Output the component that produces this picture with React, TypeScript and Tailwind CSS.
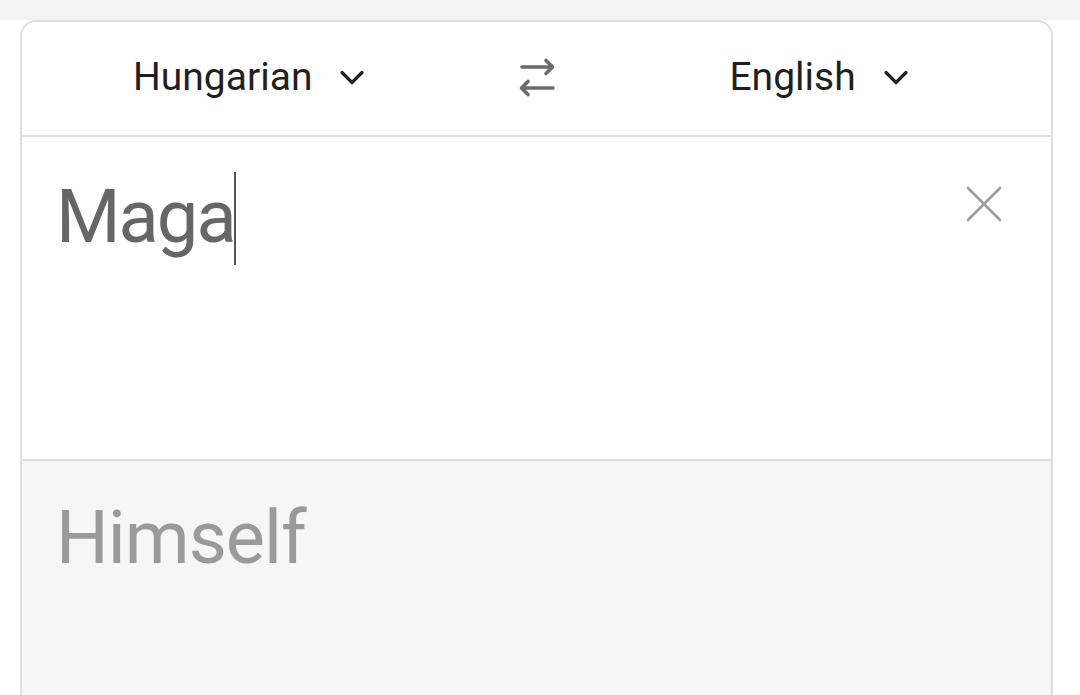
import React from "react";

const Chevron = () => (
  <svg width="26" height="17" viewBox="0 0 26 17" fill="none" className="shrink-0">
    <path d="M3 3.5 L13 13.5 L23 3.5" stroke="#222" strokeWidth="3.2" strokeLinecap="round" strokeLinejoin="round" />
  </svg>
);

const SwapIcon = () => (
  <svg width="40" height="44" viewBox="0 0 40 44" fill="none">
    <g stroke="#6b6b6b" strokeWidth="3.6" strokeLinecap="round" strokeLinejoin="round">
      <path d="M5 11 H35" />
      <path d="M29 4.5 L35.5 11 L29 17.5" />
      <path d="M5 32 H36" />
      <path d="M11 25.5 L4.5 32 L11 38.5" />
    </g>
  </svg>
);

const CloseIcon = () => (
  <svg width="36" height="36" viewBox="0 0 36 36" fill="none">
    <g stroke="#9e9e9e" strokeWidth="2.6" strokeLinecap="round">
      <path d="M2 2 L34 34" />
      <path d="M34 2 L2 34" />
    </g>
  </svg>
);

const LangButton: React.FC<{ label: string }> = ({ label }) => (
  <button className="flex items-center gap-[27px] text-[39px] leading-none text-[#1f1f1f]">
    <span>{label}</span>
    <Chevron />
  </button>
);

export default function App() {
  return (
    <div
      className="h-[695px] w-[1080px] overflow-hidden bg-white"
      style={{ fontFamily: "Roboto, 'Noto Sans', sans-serif" }}
    >
      <div className="h-[20px] bg-[#f3f3f3]" />
      <div className="ml-[20px] w-[1033px] h-[720px] rounded-t-[16px] border-2 border-[#dedede] flex flex-col overflow-hidden">
        <div className="h-[115px] shrink-0 flex items-center pl-[111px] pb-[3px] border-b-2 border-[#e0e0e0] bg-white">
          <LangButton label="Hungarian" />
          <div className="ml-[152px] mt-[2px]">
            <SwapIcon />
          </div>
          <div className="ml-[172px]">
            <LangButton label="English" />
          </div>
        </div>

        <div className="h-[324px] shrink-0 flex items-start justify-between pl-[34px] pr-[49px] pt-[43px] bg-white border-b-2 border-[#e0e0e0]">
          <div className="flex items-start">
            <span className="text-[74px] leading-none tracking-[-2px] text-[#666666]">Maga</span>
            <span className="-mt-[8px] -ml-[1px] h-[93px] w-[2px] bg-[#555555]" />
          </div>
          <button className="mt-[6px]">
            <CloseIcon />
          </button>
        </div>

        <div className="flex-1 bg-[#f6f6f6] pl-[34px] pt-[40px]">
          <span className="text-[74px] leading-none tracking-[-1px] text-[#9a9a9a]">Himself</span>
        </div>
      </div>
    </div>
  );
}
